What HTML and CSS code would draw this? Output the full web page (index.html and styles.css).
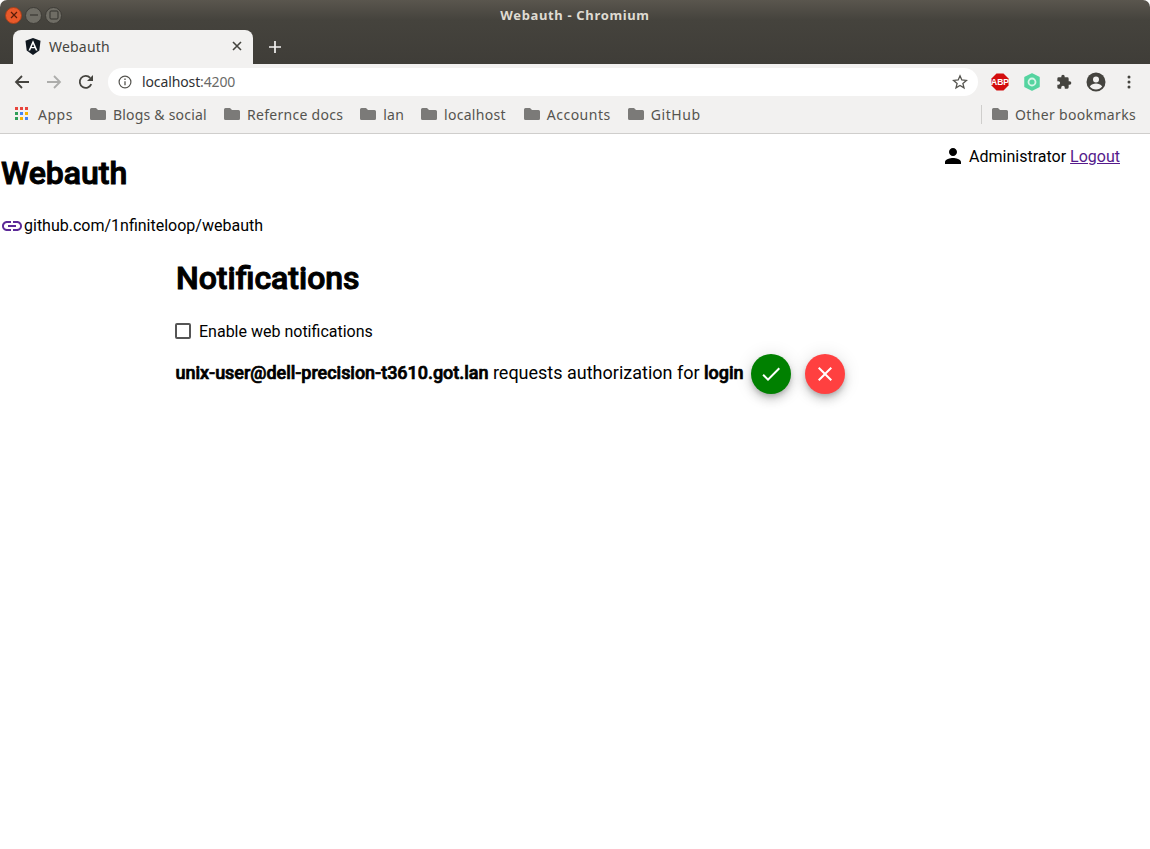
FILE: index.html
```html
<!DOCTYPE html>
<html lang="en">
<head>
<meta charset="utf-8">
<title>Webauth</title>
<link rel="stylesheet" href="styles.css">
</head>
<body>
<div class="chrome">
  <header class="top">
    <div class="titlebar">
      <div class="winbtns">
        <span class="wb close"><svg width="10" height="10" viewBox="0 0 10 10"><path d="M2 2l6 6M8 2l-6 6" stroke="#5a1d08" stroke-width="1.200"/></svg></span>
        <span class="wb"><svg width="10" height="10" viewBox="0 0 10 10"><path d="M1 5h8" stroke="#33322e" stroke-width="1.100"/></svg></span>
        <span class="wb"><svg width="10" height="10" viewBox="0 0 10 10"><rect x="1" y="1" width="8" height="8" rx="1" fill="none" stroke="#33322e" stroke-width="1"/></svg></span>
      </div>
      <div class="wintitle">Webauth - Chromium</div>
    </div>
    <div class="tabstrip">
      <div class="tab">
        <svg class="favicon" width="16" height="17" viewBox="0 0 16 17"><path d="M8 0L15.500 2.700 14.300 12.600 8 17 1.700 12.600.5 2.700z" fill="#101820"/><path d="M8 2.300L3.500 12.600h1.700l.9-2.300h3.800l.9 2.300h1.700zM8 6l1.300 3H6.700z" fill="#fff"/></svg>
        <span class="tabtitle">Webauth</span>
        <svg class="tabclose" width="10" height="10" viewBox="0 0 10 10"><path d="M1 1l8 8M9 1l-8 8" stroke="#45443f" stroke-width="1.600"/></svg>
      </div>
      <svg class="newtab" width="12" height="12" viewBox="0 0 12 12"><path d="M6 0v12M0 6h12" stroke="#f2f1f0" stroke-width="1.700"/></svg>
    </div>
  </header>
  <div class="toolbar">
    <svg class="navicon" width="16" height="16" viewBox="0 0 16 16"><path d="M15 8H2M8 2L2 8l6 6" fill="none" stroke="#45443f" stroke-width="1.800"/></svg>
    <svg class="navicon" width="16" height="16" viewBox="0 0 16 16"><path d="M1 8h13M8 2l6 6-6 6" fill="none" stroke="#adadab" stroke-width="1.800"/></svg>
    <svg class="navicon" width="16" height="16" viewBox="0 0 16 16"><path d="M13.300 10.200A6 6 0 1 1 12.200 3.800" fill="none" stroke="#45443f" stroke-width="1.800"/><path d="M15 1v6H9z" fill="#45443f"/></svg>
    <div class="omnibox">
      <svg width="14" height="14" viewBox="0 0 14 14"><circle cx="7" cy="7" r="5.900" fill="none" stroke="#55544f" stroke-width="1.200"/><path d="M7 6.200v4M7 3.600v1.400" stroke="#55544f" stroke-width="1.300"/></svg>
      <span class="url"><span class="host">localhost</span>:4200</span>
      <svg class="star" width="16" height="16" viewBox="0 0 16 16"><path d="M8 1.800l1.800 4.200 4.600.4-3.500 3 1.100 4.500L8 11.500l-4 2.400 1.100-4.500-3.500-3 4.600-.4z" fill="none" stroke="#55544f" stroke-width="1.300"/></svg>
    </div>
    <div class="extensions">
      <svg width="18" height="18" viewBox="0 0 18 18"><path d="M5.500.5h7l5 5v7l-5 5h-7l-5-5v-7z" fill="#d30d0d"/><text x="9" y="12" class="abp">ABP</text></svg>
      <svg width="16" height="18" viewBox="0 0 16 18"><path d="M8 1l7 3.500v9L8 17l-7-3.500v-9z" fill="#55d4a0" stroke="#55d4a0" stroke-linejoin="round" stroke-width="1.500"/><circle cx="8" cy="9" r="3.500" fill="none" stroke="#d8f5e8" stroke-width="1.800"/></svg>
      <svg width="16" height="16" viewBox="0 0 24 24"><path d="M20.500 11H19V7a2 2 0 0 0-2-2h-4V3.500a2.500 2.500 0 0 0-5 0V5H4a2 2 0 0 0-2 2v3.800h1.500a2.700 2.700 0 0 1 0 5.400H2V20a2 2 0 0 0 2 2h3.800v-1.500a2.700 2.700 0 0 1 5.400 0V22H17a2 2 0 0 0 2-2v-4h1.500a2.500 2.500 0 0 0 0-5z" fill="#45443f"/></svg>
      <svg width="20" height="20" viewBox="0 0 20 20"><circle cx="10" cy="10" r="9.500" fill="#45443f"/><circle cx="10" cy="7.500" r="3" fill="#f2f1f0"/><path d="M3.800 14.500c1.500-2.300 3.800-3 6.200-3s4.700.7 6.200 3a7.800 7.800 0 0 1-12.400 0z" fill="#f2f1f0"/></svg>
      <svg class="dots" width="4" height="14" viewBox="0 0 4 14"><circle cx="2" cy="2" r="1.500" fill="#45443f"/><circle cx="2" cy="7" r="1.500" fill="#45443f"/><circle cx="2" cy="12" r="1.500" fill="#45443f"/></svg>
    </div>
  </div>
  <nav class="bookmarks">
    <a class="bm apps">
      <svg width="14" height="14" viewBox="0 0 14 14"><g><rect x="0" y="0" width="3" height="3" fill="#e8453c"/><rect x="5" y="0" width="3" height="3" fill="#e8453c"/><rect x="10" y="0" width="3" height="3" fill="#e8453c"/><rect x="0" y="5" width="3" height="3" fill="#2f9e58"/><rect x="5" y="5" width="3" height="3" fill="#4285f4"/><rect x="10" y="5" width="3" height="3" fill="#f4b400"/><rect x="0" y="10" width="3" height="3" fill="#2f9e58"/><rect x="5" y="10" width="3" height="3" fill="#f4b400"/><rect x="10" y="10" width="3" height="3" fill="#4285f4"/></g></svg>
      Apps
    </a>
    <a class="bm blogs"><svg class="folder" width="16" height="14" viewBox="0 0 16 14"><path d="M1.500 1h4.500l2 2h6.500A1.500 1.500 0 0 1 16 4.500v7a1.500 1.500 0 0 1-1.500 1.500h-13A1.500 1.500 0 0 1 0 11.500v-9A1.500 1.500 0 0 1 1.500 1z" fill="#7b7a78"/></svg>Blogs &amp; social</a>
    <a class="bm"><svg class="folder" width="16" height="14" viewBox="0 0 16 14"><path d="M1.500 1h4.500l2 2h6.500A1.500 1.500 0 0 1 16 4.500v7a1.500 1.500 0 0 1-1.500 1.500h-13A1.500 1.500 0 0 1 0 11.500v-9A1.500 1.500 0 0 1 1.500 1z" fill="#7b7a78"/></svg>Refernce docs</a>
    <a class="bm"><svg class="folder" width="16" height="14" viewBox="0 0 16 14"><path d="M1.500 1h4.500l2 2h6.500A1.500 1.500 0 0 1 16 4.500v7a1.500 1.500 0 0 1-1.500 1.500h-13A1.500 1.500 0 0 1 0 11.500v-9A1.500 1.500 0 0 1 1.500 1z" fill="#7b7a78"/></svg>lan</a>
    <a class="bm"><svg class="folder" width="16" height="14" viewBox="0 0 16 14"><path d="M1.500 1h4.500l2 2h6.500A1.500 1.500 0 0 1 16 4.500v7a1.500 1.500 0 0 1-1.500 1.500h-13A1.500 1.500 0 0 1 0 11.500v-9A1.500 1.500 0 0 1 1.500 1z" fill="#7b7a78"/></svg>localhost</a>
    <a class="bm accounts"><svg class="folder" width="16" height="14" viewBox="0 0 16 14"><path d="M1.500 1h4.500l2 2h6.500A1.500 1.500 0 0 1 16 4.500v7a1.500 1.500 0 0 1-1.500 1.500h-13A1.500 1.500 0 0 1 0 11.500v-9A1.500 1.500 0 0 1 1.500 1z" fill="#7b7a78"/></svg>Accounts</a>
    <a class="bm github"><svg class="folder" width="16" height="14" viewBox="0 0 16 14"><path d="M1.500 1h4.500l2 2h6.500A1.500 1.500 0 0 1 16 4.500v7a1.500 1.500 0 0 1-1.500 1.500h-13A1.500 1.500 0 0 1 0 11.500v-9A1.500 1.500 0 0 1 1.500 1z" fill="#7b7a78"/></svg>GitHub</a>
    <a class="bm other"><svg class="folder" width="16" height="14" viewBox="0 0 16 14"><path d="M1.500 1h4.500l2 2h6.500A1.500 1.500 0 0 1 16 4.500v7a1.500 1.500 0 0 1-1.500 1.500h-13A1.500 1.500 0 0 1 0 11.500v-9A1.500 1.500 0 0 1 1.500 1z" fill="#7b7a78"/></svg>Other bookmarks</a>
  </nav>
</div>
<main class="page">
  <div class="userbar">
    <svg class="person" width="24" height="24" viewBox="0 0 24 24"><path d="M12 12c2.210 0 4-1.790 4-4s-1.790-4-4-4-4 1.790-4 4 1.790 4 4 4zm0 2c-2.670 0-8 1.340-8 4v2h16v-2c0-2.660-5.330-4-8-4z"/></svg>
    <span>Administrator <a href="#" class="link">Logout</a></span>
  </div>
  <h1 class="brand">Webauth</h1>
  <div class="repo">
    <svg class="repoicon" width="24" height="24" viewBox="0 0 24 24"><path d="M3.900 12c0-1.710 1.390-3.100 3.100-3.100h4V7H7c-2.760 0-5 2.240-5 5s2.240 5 5 5h4v-1.900H7c-1.710 0-3.100-1.390-3.100-3.100zM8 13h8v-2H8v2zm9-6h-4v1.900h4c1.710 0 3.100 1.390 3.100 3.100s-1.390 3.100-3.100 3.100h-4V17h4c2.760 0 5-2.240 5-5s-2.240-5-5-5z"/></svg>
    <span>github.com/1nfiniteloop/webauth</span>
  </div>
  <section class="content">
    <h2 class="heading">Notifications</h2>
    <label class="toggle"><span class="box"></span>Enable web notifications</label>
    <div class="request">
      <span class="msg"><b>unix-user@dell-precision-t3610.got.lan</b> requests authorization for <b>login</b></span>
      <button class="fab ok"><svg width="24" height="24" viewBox="0 0 24 24"><path fill="#fff" d="M9 16.170L4.830 12l-1.420 1.410L9 19 21 7l-1.410-1.410z"/></svg></button>
      <button class="fab no"><svg width="24" height="24" viewBox="0 0 24 24"><path fill="#fff" d="M19 6.410L17.590 5 12 10.590 6.410 5 5 6.410 10.590 12 5 17.590 6.410 19 12 13.410 17.590 19 19 17.590 13.410 12z"/></svg></button>
    </div>
  </section>
</main>
</body>
</html>
```
FILE: styles.css
```css
* { box-sizing: border-box; }
html, body { margin: 0; height: 100%; }
body { background: #fff; color: #000; font-family: Roboto, sans-serif; font-size: 16px; overflow: hidden; }

.top { height: 64px; background: linear-gradient(#5a564e 0, #45433d 20px, #3f3d38 100%); display: flex; flex-direction: column; border-radius: 7px 7px 0 0; }
.titlebar { height: 30px; display: flex; align-items: center; position: relative; }
.winbtns { display: flex; gap: 3px; padding-left: 5px; align-items: center; }
.wb { width: 17px; height: 17px; border-radius: 50%; background: #6f6d65; border: 1px solid #3d3b36; display: flex; align-items: center; justify-content: center; }
.wb.close { background: #e9592a; border-color: #a33f1a; }
.wintitle { position: absolute; left: 0; right: 0; top: 6px; text-align: center; font: bold 13px/18px "Noto Sans", sans-serif; color: #dfdbd2; letter-spacing: .65px; }
.tabstrip { display: flex; align-items: center; padding-left: 13px; height: 34px; }
.tab { width: 240px; height: 34px; background: #f2f1f0; border-radius: 8px 8px 0 0; display: flex; align-items: center; padding: 0 11px 2px 12px; }
.favicon { margin-right: 8px; }
.tabtitle { flex: 1; font: 14px "Noto Sans", sans-serif; color: #45443f; letter-spacing: .2px; }
.newtab { margin-left: 16px; }

.toolbar { height: 36px; background: #f2f1f0; display: flex; align-items: center; padding-left: 14px; }
.navicon { margin-right: 16px; }
.toolbar .navicon:nth-child(3) { margin-right: 14px; }
.omnibox { width: 870px; height: 28px; background: #fff; border-radius: 14px; display: flex; align-items: center; padding: 0 10px; gap: 10px; }
.url { flex: 1; font: 14px "Noto Sans", sans-serif; color: #6a6a68; letter-spacing: -.12px; padding-bottom: 1px; }
.host { color: #2f3033; }
.extensions { display: grid; grid-template-columns: repeat(5, 32px); justify-items: center; align-items: center; padding-left: 6px; }
.dots { margin-left: 1px; }
.abp { font: bold 8.5px "Liberation Sans", sans-serif; fill: #fff; text-anchor: middle; }

.bookmarks { height: 34px; background: #f2f1f0; border-bottom: 1px solid #cfcecc; display: flex; align-items: center; padding: 0 14px 5px 15px; gap: 17px; font: 14px "Noto Sans", sans-serif; letter-spacing: .28px; color: #55544f; }
.bm { display: flex; align-items: center; gap: 7px; white-space: nowrap; }
.bm.apps { gap: 9px; letter-spacing: .5px; }
.bm.blogs { letter-spacing: .22px; }
.bm.accounts { margin-left: 1px; letter-spacing: .5px; }
.bm.github { letter-spacing: .6px; }
.bm.other { margin-left: auto; border-left: 1px solid #cfcecc; padding-left: 10px; height: 19px; letter-spacing: .34px; }

.page { position: relative; padding-top: 21px; }
.userbar { position: absolute; top: 10px; right: 30px; display: flex; align-items: center; gap: 4px; }
.person { display: block; }
.link { color: #551a8b; }
.brand { margin: 0; padding-left: 1px; font-size: 32px; line-height: 37px; font-weight: 500; -webkit-text-stroke: 1px #000; }
.repo { display: flex; align-items: center; margin-top: 21px; height: 24px; }
.repoicon { fill: #5c2a98; margin-top: 2px; }
.content { margin-left: 175px; }
.heading { margin: 23px 0 0; padding-left: 1px; font-size: 32px; line-height: 37px; font-weight: 500; -webkit-text-stroke: 1px #000; }
.toggle { display: flex; align-items: center; gap: 8px; margin-top: 24px; height: 20px; }
.box { width: 16px; height: 16px; border: 2px solid #555; border-radius: 2px; }
.request { display: flex; align-items: center; margin-top: 13px; }
.msg { font-size: 18px; margin: 0 7.500px 4px 0; padding-left: .5px; }
.msg b { font-weight: 500; letter-spacing: -.03px; -webkit-text-stroke: .7px #000; }
.fab { width: 40px; height: 40px; border: 0; border-radius: 50%; padding: 8px; margin-right: 14px; box-shadow: 0 3px 5px -1px rgba(0,0,0,.2), 0 6px 10px 0 rgba(0,0,0,.14), 0 1px 18px 0 rgba(0,0,0,.12); display: flex; align-items: center; justify-content: center; }
.ok { background: #008000; }
.no { background: #ff4040; }
```
